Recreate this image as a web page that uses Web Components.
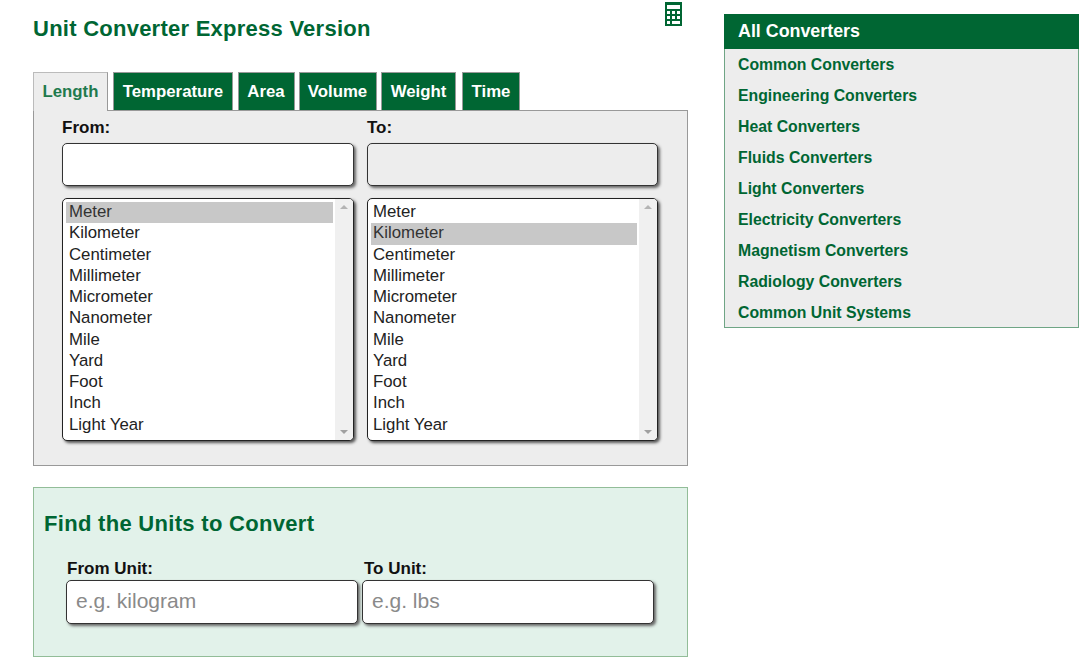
<!DOCTYPE html>
<html>
<head>
<meta charset="utf-8">
<title>Unit Converter Express Version</title>
<style>
    html, body { margin: 0; padding: 0; background: #fff; }
    body { font-family: "Liberation Sans", Arial, sans-serif; overflow: hidden; height: 665px; }
</style>
</head>
<body>
<converter-page>
    <title-bar slot="main">Unit Converter Express Version</title-bar>
    <tab-bar slot="main">
        <tab-item active>Length</tab-item>
        <tab-item style="--w:120px;--gap:5px">Temperature</tab-item>
        <tab-item style="--w:57px;--gap:5px;--pad:1px">Area</tab-item>
        <tab-item style="--w:78px;--gap:4px;--pad:1px">Volume</tab-item>
        <tab-item style="--w:75px;--gap:4px">Weight</tab-item>
        <tab-item style="--w:58px;--gap:6px">Time</tab-item>
    </tab-bar>
    <convert-panel slot="main">
        <convert-column label="From:" selected="0" style="--text-inset:3px"></convert-column>
        <convert-column label="To:" selected="1" readonly style="--text-inset:2px"></convert-column>
    </convert-panel>
    <find-units slot="main"></find-units>
    <side-menu slot="side" heading="All Converters">
        <side-link>Common Converters</side-link>
        <side-link>Engineering Converters</side-link>
        <side-link>Heat Converters</side-link>
        <side-link>Fluids Converters</side-link>
        <side-link>Light Converters</side-link>
        <side-link>Electricity Converters</side-link>
        <side-link>Magnetism Converters</side-link>
        <side-link>Radiology Converters</side-link>
        <side-link>Common Unit Systems</side-link>
    </side-menu>
</converter-page>

<script>
const UNITS = ["Meter", "Kilometer", "Centimeter", "Millimeter", "Micrometer", "Nanometer", "Mile", "Yard", "Foot", "Inch", "Light Year"];

class BaseElement extends HTMLElement {
    constructor() {
        super();
        this.shadowDOM = this.attachShadow({ mode: "open" });
    }
    connectedCallback() {
        this.render();
    }
}

class ConverterPage extends BaseElement {
    render() {
        this.shadowDOM.innerHTML = `
            <style>
                :host { display: flex; align-items: flex-start; padding-left: 33px; }
                .main { width: 655px; flex: none; }
                .side { width: 355px; flex: none; margin-left: 36px; padding-top: 14px; }
            </style>
            <div class="main"><slot name="main"></slot></div>
            <div class="side"><slot name="side"></slot></div>`;
    }
}

class TitleBar extends BaseElement {
    render() {
        this.shadowDOM.innerHTML = `
            <style>
                :host {
                    display: flex;
                    justify-content: space-between;
                    align-items: flex-start;
                    height: 72px;
                }
                h1 {
                    margin: 15px 0 0;
                    font-size: 22px;
                    line-height: 28px;
                    font-weight: bold;
                    letter-spacing: 0.25px;
                    color: #006633;
                }
                svg { margin: 2px 6px 0 0; display: block; }
            </style>
            <h1><slot></slot></h1>
            <svg width="17" height="24" viewBox="0 0 17 24">
                <path fill="#006633" fill-rule="evenodd" d="M0 0H17V24H0ZM2 3V7H15V3ZM2 9V12H5V9ZM7 9V12H10V9ZM12 9V12H15V9ZM2 14V17H5V14ZM7 14V17H10V14ZM12 14V17H15V14ZM2 19V22H5V19ZM7 19V22H15V19Z"/>
            </svg>`;
    }
}

class TabBar extends BaseElement {
    render() {
        this.shadowDOM.innerHTML = `
            <style>
                :host { display: flex; height: 38px; position: relative; z-index: 1; }
            </style>
            <slot></slot>`;
    }
}

class TabItem extends BaseElement {
    render() {
        this.shadowDOM.innerHTML = `
            <style>
                :host {
                    display: flex;
                    align-items: center;
                    justify-content: center;
                    box-sizing: border-box;
                    flex: none;
                    width: var(--w, 75px);
                    margin-left: var(--gap, 0);
                    height: 38px;
                    padding-right: var(--pad, 0);
                    border: 1px solid #999;
                    border-bottom: 0;
                    background: #006633;
                    color: #fff;
                    font-size: 16.8px;
                    font-weight: bold;
                }
                :host([active]) {
                    height: 39px;
                    background: #ededed;
                    color: #1f7a4d;
                    border-color: #bbb;
                    border-right-color: #999;
                    padding-bottom: 1px;
                }
            </style>
            <slot></slot>`;
    }
}

class ConvertPanel extends BaseElement {
    render() {
        this.shadowDOM.innerHTML = `
            <style>
                :host {
                    display: grid;
                    grid-template-columns: 292px 291px;
                    column-gap: 13px;
                    box-sizing: border-box;
                    height: 356px;
                    padding: 8px 0 0 28px;
                    background: #ededed;
                    border: 1px solid #999;
                }
            </style>
            <slot></slot>`;
    }
}

class ConvertColumn extends BaseElement {
    render() {
        const selected = Number(this.getAttribute("selected"));
        const rows = UNITS.map((unit, i) =>
            `<div class="opt ${i === selected ? "sel" : ""}">${unit}</div>`).join("");
        this.shadowDOM.innerHTML = `
            <style>
                :host { display: block; }
                label {
                    display: block;
                    height: 24px;
                    font-size: 17px;
                    line-height: 18px;
                    font-weight: bold;
                    color: #111;
                }
                .box {
                    box-sizing: border-box;
                    height: 43px;
                    border: 1px solid #333;
                    border-radius: 5px;
                    background: #fff;
                    box-shadow: 2px 2px 3px #666;
                }
                :host([readonly]) .box { background: #ededed; }
                .list {
                    display: flex;
                    box-sizing: border-box;
                    height: 243px;
                    margin-top: 12px;
                    border: 1px solid #222;
                    border-radius: 5px;
                    background: #fff;
                    box-shadow: 2px 2px 3px #555;
                    overflow: hidden;
                }
                .rows { flex: 1; padding: 3px 2px 0 3px; min-width: 0; }
                .opt {
                    height: 21.25px;
                    line-height: 20.6px;
                    padding-left: var(--text-inset, 3px);
                    font-size: 16.8px;
                    color: #222;
                    white-space: nowrap;
                }
                .sel { background: #c8c8c8; color: #333; }
                .bar {
                    flex: none;
                    width: 18px;
                    background: #f0f0f0;
                    display: flex;
                    flex-direction: column;
                    justify-content: space-between;
                    align-items: center;
                    padding: 6px 0;
                    box-sizing: border-box;
                }
                .up, .down { width: 0; height: 0; border: 4px solid transparent; }
                .up { border-bottom: 4px solid #b4b4b4; border-top: 0; }
                .down { border-top: 4px solid #a0a0a0; border-bottom: 0; }
            </style>
            <label>${this.getAttribute("label")}</label>
            <div class="box"></div>
            <div class="list">
                <div class="rows">${rows}</div>
                <div class="bar"><span class="up"></span><span class="down"></span></div>
            </div>`;
    }
}

class FindUnits extends BaseElement {
    render() {
        this.shadowDOM.innerHTML = `
            <style>
                :host {
                    display: block;
                    box-sizing: border-box;
                    height: 170px;
                    margin-top: 21px;
                    padding: 22px 0 0 10px;
                    background: #e2f2ea;
                    border: 1px solid #92bd98;
                }
                h2 {
                    margin: 0;
                    font-size: 22px;
                    line-height: 28px;
                    font-weight: bold;
                    letter-spacing: 0.3px;
                    color: #006633;
                }
                .fields {
                    display: grid;
                    grid-template-columns: 292px 292px;
                    column-gap: 4px;
                    margin: 22px 0 0 22px;
                }
                label {
                    display: block;
                    height: 20px;
                    padding-left: 1px;
                    font-size: 17px;
                    line-height: 18px;
                    font-weight: bold;
                    color: #111;
                }
                .fields > div + div label { padding-left: 2px; }
                .input {
                    box-sizing: border-box;
                    height: 44px;
                    padding-left: 9px;
                    border: 1px solid #333;
                    border-radius: 5px;
                    background: #fff;
                    box-shadow: 2px 2px 3px #666;
                    font-size: 21px;
                    line-height: 40px;
                    color: #8a8a8a;
                }
            </style>
            <h2>Find the Units to Convert</h2>
            <div class="fields">
                <div><label>From Unit:</label><div class="input">e.g. kilogram</div></div>
                <div><label>To Unit:</label><div class="input">e.g. lbs</div></div>
            </div>`;
    }
}

class SideMenu extends BaseElement {
    render() {
        this.shadowDOM.innerHTML = `
            <style>
                :host {
                    display: block;
                    box-sizing: border-box;
                    height: 314px;
                    background: #ededed;
                    border: 1px solid #6fa585;
                    border-top: 0;
                }
                h3 {
                    margin: 0 -1px;
                    height: 35px;
                    padding-left: 14px;
                    background: #006633;
                    color: #fff;
                    font-size: 17.85px;
                    line-height: 34px;
                    font-weight: bold;
                }
                .links { display: flex; flex-direction: column; padding: 0 0 0 13px; }
            </style>
            <h3>${this.getAttribute("heading")}</h3>
            <div class="links"><slot></slot></div>`;
    }
}

class SideLink extends BaseElement {
    render() {
        this.shadowDOM.innerHTML = `
            <style>
                :host {
                    display: block;
                    height: 31.05px;
                    line-height: 31.2px;
                    font-size: 15.8px;
                    font-weight: bold;
                    color: #006633;
                }
            </style>
            <slot></slot>`;
    }
}

customElements.define("converter-page", ConverterPage);
customElements.define("title-bar", TitleBar);
customElements.define("tab-bar", TabBar);
customElements.define("tab-item", TabItem);
customElements.define("convert-panel", ConvertPanel);
customElements.define("convert-column", ConvertColumn);
customElements.define("find-units", FindUnits);
customElements.define("side-menu", SideMenu);
customElements.define("side-link", SideLink);
</script>
</body>
</html>
